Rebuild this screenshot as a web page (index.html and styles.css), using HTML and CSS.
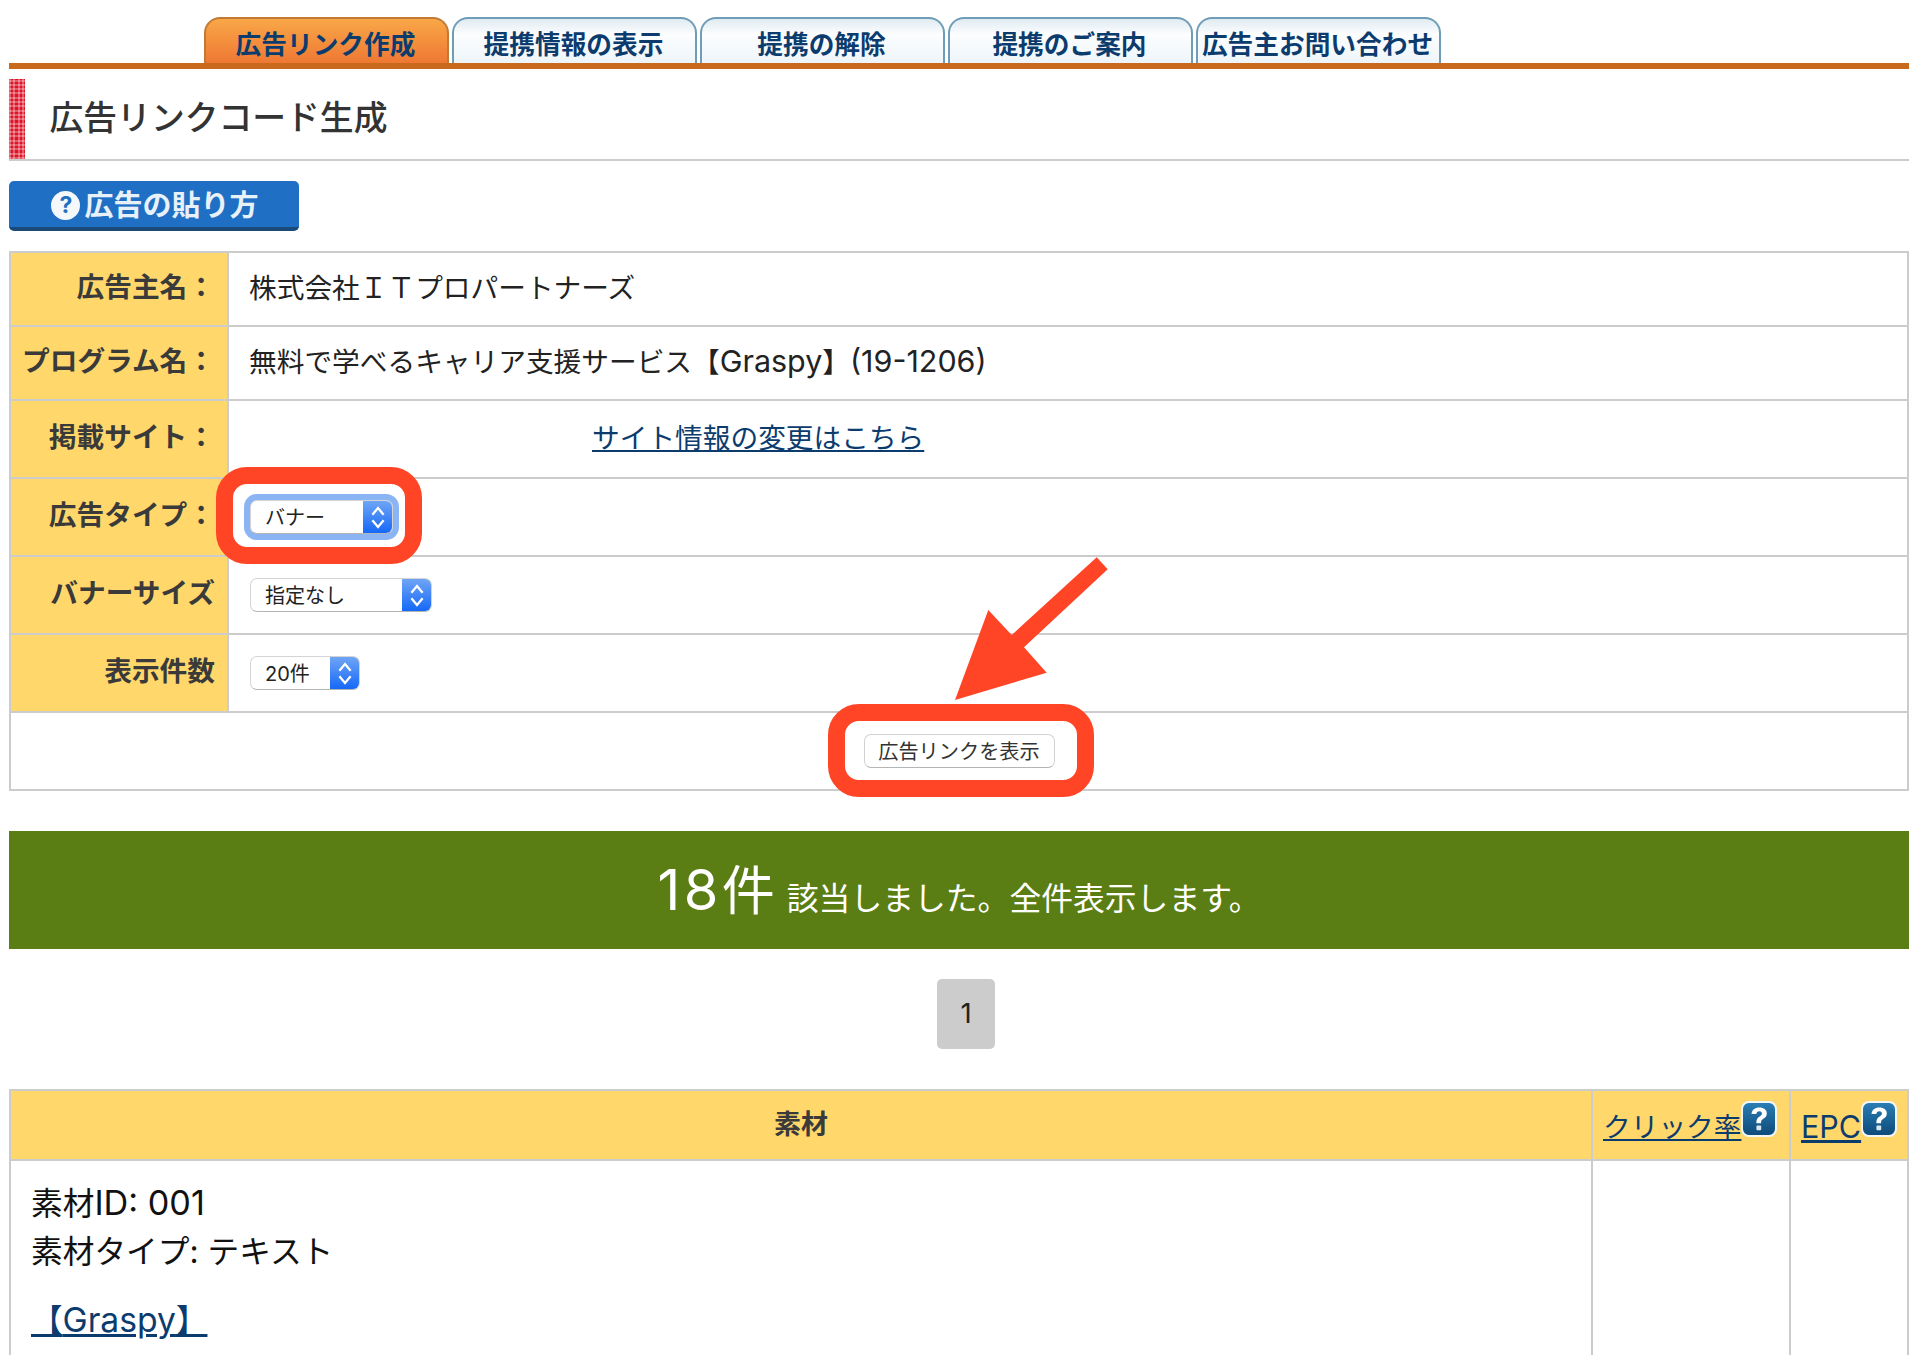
FILE: index.html
```html
<!DOCTYPE html>
<html lang="ja">
<head>
<meta charset="utf-8">
<title>広告リンクコード生成</title>
<link rel="stylesheet" href="styles.css">
</head>
<body>
<div class="page">
  <nav class="tabs">
    <a class="tab tab-active">広告リンク作成</a>
    <a class="tab">提携情報の表示</a>
    <a class="tab">提携の解除</a>
    <a class="tab">提携のご案内</a>
    <a class="tab">広告主お問い合わせ</a>
  </nav>
  <h2 class="heading"><span class="heading-mark"></span><span class="heading-text">広告リンクコード生成</span></h2>
  <a class="help-btn"><span class="help-circle">?</span><span>広告の貼り方</span></a>

  <table class="form-table">
    <tr class="row-short"><th>広告主名：</th><td>株式会社ＩＴプロパートナーズ</td></tr>
    <tr class="row-short"><th>プログラム名：</th><td>無料で学べるキャリア支援サービス【<span class="latin">Graspy</span>】<span class="latin">(19-1206)</span></td></tr>
    <tr><th>掲載サイト：</th><td><a class="link site-link">サイト情報の変更はこちら</a></td></tr>
    <tr><th>広告タイプ：</th><td class="control-cell">
      <div class="select select-focus select-type"><span class="select-text">バナー</span><span class="select-arrow"><svg viewBox="0 0 14 24" width="16" height="27"><path d="M2 9.5 7 3.5l5 6M2 14.5l5 6 5-6" fill="none" stroke="#fff" stroke-width="2"/></svg></span></div>
    </td></tr>
    <tr><th>バナーサイズ</th><td class="control-cell">
      <div class="select select-size"><span class="select-text">指定なし</span><span class="select-arrow"><svg viewBox="0 0 14 24" width="16" height="27"><path d="M2 9.5 7 3.5l5 6M2 14.5l5 6 5-6" fill="none" stroke="#fff" stroke-width="2"/></svg></span></div>
    </td></tr>
    <tr><th>表示件数</th><td class="control-cell">
      <div class="select select-count"><span class="select-text">20件</span><span class="select-arrow"><svg viewBox="0 0 14 24" width="16" height="27"><path d="M2 9.5 7 3.5l5 6M2 14.5l5 6 5-6" fill="none" stroke="#fff" stroke-width="2"/></svg></span></div>
    </td></tr>
    <tr><td colspan="2" class="submit-cell"><button class="submit" type="button">広告リンクを表示</button></td></tr>
  </table>

  <div class="banner"><span class="banner-count"><span class="banner-num">18</span>件</span><span class="banner-text">該当しました。全件表示します。</span></div>

  <div class="pager"><span class="pager-item">1</span></div>

  <table class="result-table">
    <tr class="result-head">
      <th class="col-main">素材</th>
      <th class="col-ctr"><span class="head-flex"><a class="link">クリック率</a><svg class="q-icon" viewBox="0 0 36 36" width="36" height="36"><use href="#q"/></svg></span></th>
      <th class="col-epc"><span class="head-flex"><a class="link link-epc">EPC</a><svg class="q-icon" viewBox="0 0 36 36" width="36" height="36"><use href="#q"/></svg></span></th>
    </tr>
    <tr class="result-row">
      <td>
        <div class="material-line">素材<span class="latin">ID: 001</span></div>
        <div class="material-line">素材タイプ: テキスト</div>
        <a class="link material-link">【<span class="latin-link">Graspy</span>】</a>
      </td>
      <td></td>
      <td></td>
    </tr>
  </table>
</div>

<svg class="defs" width="0" height="0">
  <defs>
    <linearGradient id="qg" x1="0" y1="0" x2="0" y2="1">
      <stop offset="0" stop-color="#2a7fb5"/>
      <stop offset="1" stop-color="#0d4a78"/>
    </linearGradient>
    <symbol id="q" viewBox="0 0 36 36">
      <rect x="1" y="1" width="34" height="34" rx="7" fill="url(#qg)" stroke="#f2f6f8" stroke-width="2"/>
      <path d="M10.500 13c.4-4.200 3.400-6.500 7.800-6.500 4.500 0 7.500 2.300 7.500 5.900 0 2.600-1.400 4-3.400 5.400-1.700 1.200-2.300 1.800-2.300 3.700v.8h-4.700v-1.300c0-2.900 1.100-4.200 3.200-5.600 1.600-1 2.300-1.700 2.300-3 0-1.300-1.100-2.100-2.600-2.100-1.700 0-2.700 1-3 2.700z" fill="#fff"/>
      <rect x="15.400" y="24.500" width="4.800" height="4.800" rx="1" fill="#d9e6ee"/>
    </symbol>
  </defs>
</svg>

<div class="ring ring-type"></div>
<div class="ring ring-submit"></div>
<svg class="arrow" viewBox="0 0 160 150" width="160" height="150"><polygon points="5,148 38.300,58 61.700,83 146.700,5.300 157.700,17.300 74,95.300 96.700,120.700" fill="#ff4525"/></svg>
</body>
</html>
```
FILE: styles.css
```css
* { box-sizing: border-box; }
html, body { margin: 0; padding: 0; }
body {
  position: relative;
  width: 1923px;
  height: 1355px;
  overflow: hidden;
  background: #fff;
  color: #111;
  font-family: Inter, "Noto Sans CJK JP", "Noto Sans", sans-serif;
  font-size: 27.7px;
}
.page { padding: 17px 14px 0 9px; }
a { text-decoration: none; }
.link { color: #0c3c6e; text-decoration: underline; }
.latin { font-size: 1.1em; line-height: 1; }
.latin-link { font-size: 1.07em; line-height: 1; }

.tabs {
  display: flex;
  gap: 3px;
  height: 52px;
  padding-left: 195px;
  border-bottom: 6px solid #c9691c;
}
.tab {
  width: 245px;
  height: 46px;
  display: flex;
  align-items: center;
  justify-content: center;
  border: 2px solid #6f9cb6;
  border-bottom: 0;
  border-radius: 16px 16px 0 0;
  background: linear-gradient(#dfebf2, #fcfdfe 35%, #edf5fa);
  color: #0c3c6e;
  font-size: 25.7px;
  font-weight: 700;
  line-height: 1;
  padding: 7px 2px 0 0;
}
.tab-active {
  border-color: #c07a35;
  background: linear-gradient(#f9a748, #ee7833);
}

.heading {
  display: flex;
  align-items: center;
  height: 82px;
  margin: 10px 0 0;
  border-bottom: 2px solid #ccc;
  font-size: 33.8px;
  font-weight: 500;
  color: #333;
}
.heading-mark {
  width: 16px;
  height: 80px;
  background-color: #dc1428;
  background-image:
    repeating-linear-gradient(90deg, rgba(255,255,255,.3) 0 2px, transparent 2px 4.300px),
    repeating-linear-gradient(0deg, rgba(255,255,255,.3) 0 2px, transparent 2px 4.300px);
}
.heading-text { margin-left: 24.500px; margin-bottom: 8px; }

.help-btn {
  display: flex;
  align-items: center;
  justify-content: center;
  gap: 4px;
  width: 290px;
  height: 50px;
  margin-top: 20px;
  padding: 3px 0 0 2px;
  border-bottom: 4px solid #1a4a7a;
  border-radius: 5px;
  background: #1f70c4;
  color: #e9f1f8;
  font-size: 29px;
  font-weight: 700;
  line-height: 1;
}
.help-circle {
  width: 29px;
  height: 29px;
  border-radius: 50%;
  background: #f5f8fb;
  color: #1f70c4;
  font-size: 23px;
  font-weight: 700;
  text-align: center;
  line-height: 29px;
}

table { width: 1900px; border-spacing: 0; border-collapse: separate; table-layout: fixed; }
.form-table {
  margin-top: 20px;
  border-top: 2px solid #ccc;
  border-left: 2px solid #ccc;
}
.form-table th, .form-table td {
  height: 78px;
  padding: 0;
  border-right: 2px solid #ccc;
  border-bottom: 2px solid #ccc;
}
.form-table .row-short th, .form-table .row-short td { height: 74px; }
.form-table th {
  width: 218px;
  padding: 0 12px 8px 0;
  background: #ffd76b;
  color: #3a3a3a;
  text-align: right;
  font-weight: 700;
  white-space: nowrap;
}
.form-table td { padding: 0 0 7px 20px; color: #222; }
.form-table td.control-cell { padding: 0 0 0 21px; }
.form-table td.submit-cell { padding: 0; }
.site-link { margin-left: 343px; }

.select {
  display: flex;
  height: 34px;
  border: 1px solid #d4d4d4;
  border-bottom-color: #b5b5b5;
  border-radius: 7px;
  background: #fff;
  color: #222;
  font-size: 20px;
  line-height: 34px;
  overflow: hidden;
}
.select-text { flex: 1; padding-left: 14px; }
.select-arrow {
  width: 29px;
  display: flex;
  align-items: center;
  justify-content: center;
  background: linear-gradient(#6fa5f5, #1668f8);
}
.select-type { width: 143px; }
.select-size { width: 182px; }
.select-count { width: 110px; }
.select-focus { box-shadow: 0 0 0 6px #8ab4f4; }

.submit {
  display: block;
  width: 191px;
  height: 34px;
  margin: 0 auto;
  padding: 2px 0 0;
  border: 1px solid #d2d2d2;
  border-bottom-color: #b5b5b5;
  border-radius: 7px;
  background: #fff;
  color: #333;
  font-family: inherit;
  font-size: 20.2px;
  line-height: 30px;
}

.banner {
  display: flex;
  align-items: baseline;
  justify-content: center;
  height: 118px;
  margin-top: 40px;
  padding: 20px 0 0;
  background: #5a7d14;
  color: #fff;
  line-height: 78px;
}
.banner-count { font-size: 53px; }
.banner-num { font-size: 56px; letter-spacing: 3.5px; }
.banner-text { margin-left: 12px; font-size: 31.8px; }

.pager { display: flex; justify-content: center; margin-top: 30px; padding-left: 14px; }
.pager-item {
  width: 58px;
  height: 70px;
  border-radius: 5px;
  background: #ccc;
  color: #222;
  font-size: 27.5px;
  line-height: 68px;
  text-align: center;
}

.result-table {
  margin-top: 40px;
  border-top: 2px solid #ccc;
  border-left: 2px solid #ccc;
}
.result-table th, .result-table td {
  padding: 0;
  border-right: 2px solid #ccc;
  border-bottom: 2px solid #ccc;
}
.result-head th {
  height: 70px;
  background: #ffd76b;
  color: #3a3a3a;
  font-size: 27px;
  font-weight: 700;
}
.col-main { width: 1582px; }
.result-table th.col-main { padding-bottom: 5px; }
.col-ctr { width: 198px; }
.col-epc { width: 118px; }
.head-flex {
  display: flex;
  align-items: flex-start;
  height: 68px;
  padding: 10px 0 0 10px;
}
.result-head .link { margin-top: 10px; font-size: 27.7px; font-weight: 400; line-height: 32px; }
.result-head .link-epc { font-size: 30.5px; }
.q-icon { flex: none; }
.result-table .result-row td { height: 194px; border-bottom: 0; vertical-align: top; }
.result-table .result-row td:first-child { padding: 19px 0 0 20px; }
.material-line { font-size: 31.7px; line-height: 47.5px; color: #111; }
.material-line .latin { font-size: 1.08em; }
.material-link { display: inline-block; margin-top: 24px; font-size: 31.500px; line-height: 44px; }

.defs { position: absolute; }
.ring {
  position: absolute;
  border: 17px solid #ff4525;
  border-radius: 31px;
}
.ring-type { left: 216px; top: 467px; width: 206px; height: 97px; }
.ring-submit { left: 828px; top: 704px; width: 266px; height: 93px; }
.arrow { position: absolute; left: 950px; top: 552px; }
```
